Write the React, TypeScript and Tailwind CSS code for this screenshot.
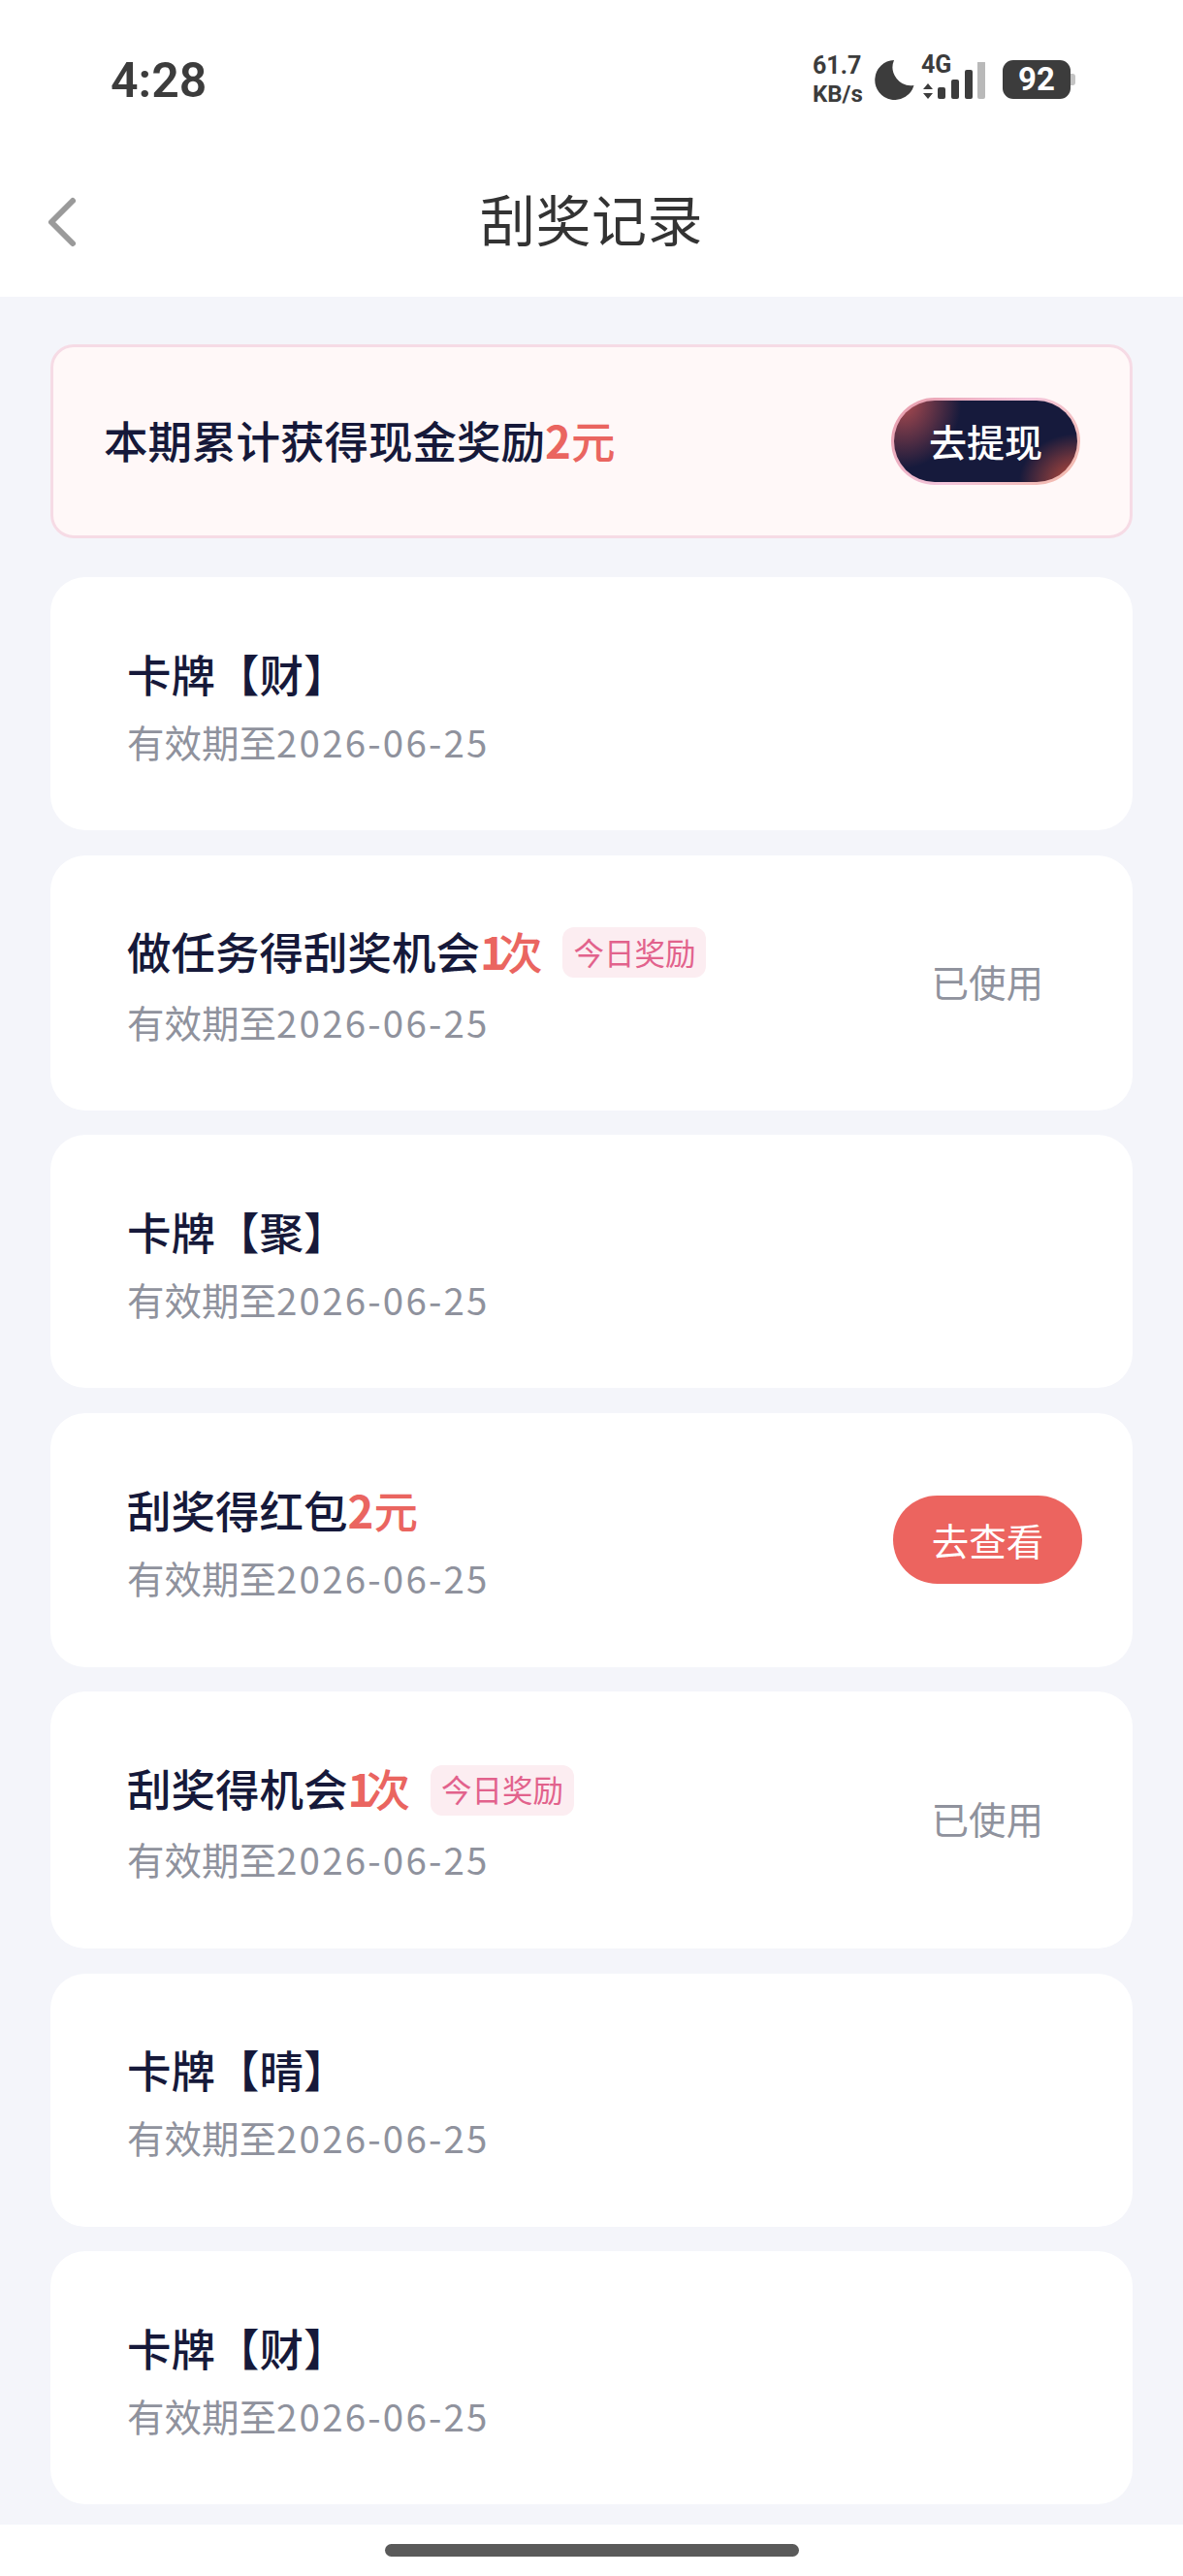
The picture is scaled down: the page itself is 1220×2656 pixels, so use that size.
const font = "font-['Noto_Sans_CJK_SC','Noto_Sans',sans-serif]";

function StatusBar() {
  return (
    <div className="flex h-[130px] items-start justify-between bg-white pl-[114px] pr-[111px]">
      <div className="mt-[58px] font-['Roboto',sans-serif] text-[50px] leading-[50px] font-semibold text-[#3c3c3c]">4:28</div>
      <div className="mt-[56px] flex items-start">
        <div className="flex w-[62px] flex-col font-['Roboto',sans-serif] leading-[26px] font-bold text-[#3c3c3c]">
          <span className="-mt-[1px] block h-[29px] text-[25px]">61.7</span>
          <span className="text-[24px]">KB/s</span>
        </div>
        <svg width="42" height="42" viewBox="0 0 42 42" className="mt-[5px] ml-[1px]">
          <path d="M21 1 A20.5 20.5 0 1 0 41.5 27 A19 19 0 0 1 21 1 Z" fill="#3c3c3c" />
        </svg>
        <div className="relative ml-[7px] h-[48px] w-[68px]">
          <span className="absolute -top-[1px] left-0 font-['Roboto',sans-serif] text-[25px] leading-[24px] font-bold text-[#3c3c3c]">4G</span>
          <svg width="68" height="48" viewBox="0 0 68 48" className="absolute top-[8px] left-0">
            <path d="M2 28 L7 22 L12 28 Z M2 32 L12 32 L7 38 Z" fill="#3c3c3c" />
            <rect x="17" y="26" width="8" height="12" rx="2" fill="#3c3c3c" />
            <rect x="31" y="18" width="8" height="20" rx="2" fill="#3c3c3c" />
            <rect x="45" y="8" width="8" height="30" rx="2" fill="#3c3c3c" />
            <rect x="58" y="-1" width="8" height="39" rx="2" fill="#b9b9b9" />
          </svg>
        </div>
        <div className="ml-[16px] flex items-center">
          <div className="mt-[6px] flex h-[40px] w-[70px] items-center justify-center rounded-[11px] bg-[#3c3c3c] font-['Roboto',sans-serif] text-[33px] leading-[30px] font-bold text-white">92</div>
          <div className="mt-[6px] h-[12px] w-[5px] rounded-r-[3px] bg-[#c4c4c4]" />
        </div>
      </div>
    </div>
  );
}

function NavBar() {
  return (
    <div className="relative flex h-[176px] items-start justify-center bg-white">
      <svg width="40" height="60" viewBox="0 0 40 60" className="absolute top-[69px] left-[44px]">
        <path d="M31 8 L9 30 L31 52" fill="none" stroke="#9a9a9a" strokeWidth="6" strokeLinecap="round" strokeLinejoin="round" />
      </svg>
      <div className={`${font} mt-[54px] text-[57px] leading-[80px] tracking-[0.5px] text-[#333333]`}>刮奖记录</div>
    </div>
  );
}

function Banner() {
  return (
    <div className="mx-[52px] flex h-[200px] items-center justify-between rounded-[24px] border-[3px] border-[#f6dbe5] bg-[#fff8f8] pr-[51px] pl-[52px]">
      <div className={`${font} mb-[4px] text-[45.5px] leading-[60px] font-medium text-[#16193a]`}>
        本期累计获得现金奖励<span className="text-[#ea6560]"><b className="font-bold">2</b>元</span>
      </div>
      <div className="flex h-[90px] w-[195px] items-center justify-center rounded-full bg-[linear-gradient(135deg,#e79aa8,#f3c6dc_50%,#f2b8a8)] p-[3px]">
        <div className={`${font} flex h-full w-full items-center justify-center rounded-full bg-[#161a3c] bg-[radial-gradient(ellipse_60px_50px_at_100%_100%,#c9503d,rgba(22,26,60,0)),radial-gradient(ellipse_60px_70px_at_5%_0%,#b04c50,rgba(22,26,60,0))] pb-[2px] text-[39px] leading-[50px] font-medium text-white`}>去提现</div>
      </div>
    </div>
  );
}

function Tag() {
  return <span className={`${font} mt-[5px] ml-[21px] flex h-[52px] w-[148px] items-center justify-center rounded-[12px] bg-[#fcedf1] pb-[3px] text-[31.5px] leading-[40px] text-[#e2628c]`}>今日奖励</span>;
}

type Item = { title: string; red?: [string, string]; tag?: boolean; status?: "used" | "view"; h: string };

function Card({ title, red, tag, status, h }: Item) {
  const narrow = red && red[0] === "1";
  return (
    <div className={`flex ${h} items-center justify-between rounded-[36px] bg-white pr-[52px] pl-[79px]`}>
      <div className="flex flex-col pt-[6px]">
        <div className="flex h-[60px] items-center">
          <span className={`${font} text-[45.5px] leading-[60px] font-medium whitespace-nowrap text-[#16193a]`}>
            {title}
            {red && <span className="text-[#ea6560]"><b className={narrow ? "font-bold tracking-[-8px]" : "font-bold"}>{red[0]}</b>{red[1]}</span>}
          </span>
          {tag && <Tag />}
        </div>
        <div className={`${font} ${tag ? "mt-[13px]" : "mt-[10px]"} text-[38.5px] leading-[60px] text-[#8f929d]`}>
          有效期至<span className="tracking-[2.2px]">2026-06-25</span>
        </div>
      </div>
      {status === "used" && <span className={`${font} mr-[40px] mb-[5px] text-[38.5px] leading-[50px] text-[#8f929d]`}>已使用</span>}
      {status === "view" && (
        <div className={`${font} flex h-[91px] w-[195px] items-center justify-center rounded-full bg-[#ec645f] pb-[2px] text-[38.5px] leading-[50px] text-white`}>去查看</div>
      )}
    </div>
  );
}

const items: Item[] = [
  { title: "卡牌【财】", h: "h-[261px]" },
  { title: "做任务得刮奖机会", red: ["1", "次"], tag: true, status: "used", h: "h-[263px]" },
  { title: "卡牌【聚】", h: "h-[261px]" },
  { title: "刮奖得红包", red: ["2", "元"], status: "view", h: "h-[262px]" },
  { title: "刮奖得机会", red: ["1", "次"], tag: true, status: "used", h: "h-[265px]" },
  { title: "卡牌【晴】", h: "h-[261px]" },
  { title: "卡牌【财】", h: "h-[261px]" },
];

export default function App() {
  return (
    <div className="flex h-[2656px] w-[1220px] flex-col overflow-hidden bg-[#f4f5fa]">
      <StatusBar />
      <NavBar />
      <div className="flex-1 pt-[49px]">
        <Banner />
        <div className="mx-[52px] mt-[40px] flex flex-col gap-[25.5px]">
          {items.map((it, i) => <Card key={i} {...it} />)}
        </div>
      </div>
      <div className="flex h-[53px] justify-center bg-white pt-[20px]">
        <div className="h-[13px] w-[427px] rounded-full bg-[#5a5a5a]" />
      </div>
    </div>
  );
}
